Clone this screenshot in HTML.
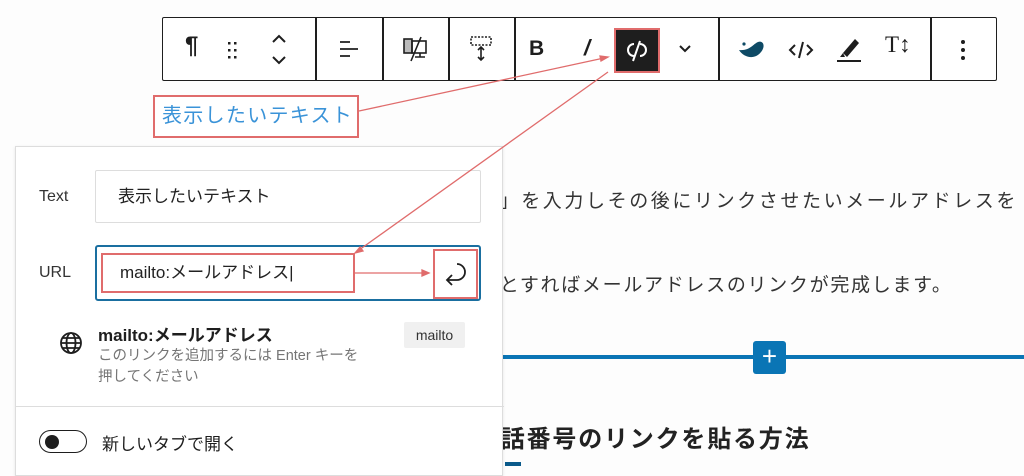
<!DOCTYPE html>
<html><head><meta charset="utf-8"><style>
*{box-sizing:border-box;margin:0;padding:0}
body{width:1024px;height:466px;overflow:hidden;background:#fdfdfd;font-family:"Liberation Sans","Noto Sans CJK JP",sans-serif;position:relative;color:#1e1e1e}
.abs{position:absolute}
.tb{left:162px;top:17px;width:835px;height:64px;border:1.5px solid #1e1e1e;border-radius:2px;background:#fff}
.sep{position:absolute;top:0;bottom:0;width:1.5px;background:#1e1e1e}
.body{font-size:19px;color:#333;white-space:nowrap;letter-spacing:1.7px}
</style></head><body>
<div class="abs body" style="left:478px;top:186px;letter-spacing:2.6px">ト」を入力しその後にリンクさせたいメールアドレスを</div>
<div class="abs body" style="left:479px;top:270px">」とすればメールアドレスのリンクが完成します。</div>
<div class="abs" style="left:500px;top:355px;width:524px;height:4px;background:#0a75b5"></div>
<div class="abs" style="left:753px;top:341px;width:33px;height:33px;background:#0a75b5;border-radius:3px;color:#fff;font-size:26px;line-height:31px;text-align:center">+</div>
<div class="abs" style="left:475px;top:419px;font-size:24px;letter-spacing:1.8px;font-weight:bold;color:#222;white-space:nowrap">電話番号のリンクを貼る方法</div>
<div class="abs" style="left:505px;top:462px;width:16px;height:4px;background:#0a5a8a"></div>

<div class="abs tb">
<div class="sep" style="left:152px"></div><div class="sep" style="left:219px"></div><div class="sep" style="left:285px"></div><div class="sep" style="left:351px"></div><div class="sep" style="left:555px"></div><div class="sep" style="left:767px"></div>
<div class="abs" style="left:22px;top:14px;font-size:24px;font-weight:bold">¶</div>
<svg class="abs" style="left:63px;top:22px" width="14" height="20"><g fill="#1e1e1e"><rect x="2" y="2" width="2.5" height="2.5"/><rect x="8" y="2" width="2.5" height="2.5"/><rect x="2" y="9" width="2.5" height="2.5"/><rect x="8" y="9" width="2.5" height="2.5"/><rect x="2" y="16" width="2.5" height="2.5"/><rect x="8" y="16" width="2.5" height="2.5"/></g></svg>
<svg class="abs" style="left:106px;top:14px" width="20" height="36" fill="none" stroke="#1e1e1e" stroke-width="2"><path d="M4 10l6-6 6 6M4 25l6 6 6-6"/></svg>
<svg class="abs" style="left:174px;top:19px" width="24" height="24" stroke="#1e1e1e" stroke-width="1.8"><path d="M3 5h10M3 12h18M3 19h10"/></svg>
<svg class="abs" style="left:238px;top:17px" width="30" height="28" fill="none" stroke="#1e1e1e" stroke-width="1.6"><rect x="3" y="4" width="8" height="14" fill="#1e1e1e" fill-opacity=".3"/><rect x="11" y="6" width="14" height="12"/><path d="M14 22h10M19 18v4M20 2l-10 24"/></svg>
<svg class="abs" style="left:304px;top:16px" width="28" height="30" fill="none" stroke="#1e1e1e" stroke-width="1.6"><rect x="4" y="3" width="20" height="8" stroke-dasharray="2 1.5"/><path d="M14 13v13M11 16l3-3 3 3M11 23l3 3 3-3"/></svg>
<div class="abs" style="left:366px;top:19px;font-size:21px;font-weight:bold">B</div>
<div class="abs" style="left:421px;top:17px;font-size:22px;font-style:italic;font-weight:bold">/</div>
<div class="abs" style="left:451px;top:10px;width:46px;height:45px;background:#1e1e1e;border:2px solid #e06c6c"></div>
<svg class="abs" style="left:460px;top:19px" width="28" height="28" fill="none" stroke="#fff" stroke-width="2"><path d="M11 7a6 6 0 0 0 0 12M17 7a6 6 0 0 1 0 12M17 4l-7 20"/></svg>
<svg class="abs" style="left:514px;top:24px" width="16" height="14" fill="none" stroke="#1e1e1e" stroke-width="2"><path d="M3 4l5 5 5-5"/></svg>
<svg class="abs" style="left:574px;top:18px" width="30" height="26"><path d="M2 14c5 8 16 10 22 2 5-6 2-12-3-10-5 2-8 9-19 8z" fill="#0e4a65"/><circle cx="7" cy="8" r="1.6" fill="#0e4a65"/></svg>
<svg class="abs" style="left:625px;top:20px" width="26" height="24" fill="none" stroke="#1e1e1e" stroke-width="2"><path d="M7 7l-5 5 5 5M19 7l5 5-5 5M15 4l-4 16"/></svg>
<svg class="abs" style="left:672px;top:15px" width="28" height="30"><path d="M8 20l12-14 4 4-12 14z" fill="#1e1e1e"/><path d="M8 20l-3 4h5z" fill="#1e1e1e"/><rect x="2" y="27" width="24" height="2" fill="#1e1e1e"/></svg>
<div class="abs" style="left:722px;top:14px;font-size:23px;font-family:'Liberation Serif',serif">T↕</div>
<svg class="abs" style="left:796px;top:20px" width="8" height="24" fill="#1e1e1e"><circle cx="4" cy="4" r="2"/><circle cx="4" cy="12" r="2"/><circle cx="4" cy="20" r="2"/></svg>
</div>

<div class="abs" style="left:153px;top:95px;width:206px;height:43px;border:2px solid #e06c6c;color:#3a93d8;font-size:20px;letter-spacing:1.3px;line-height:39px;padding-left:7px;background:#fff;white-space:nowrap">表示したいテキスト</div>

<div class="abs" style="left:15px;top:146px;width:488px;height:330px;background:#fff;border:1px solid #ddd;box-shadow:0 1px 3px rgba(0,0,0,.1)">
<div class="abs" style="left:23px;top:41px;font-size:16px;color:#333">Text</div>
<div class="abs" style="left:79px;top:23px;width:386px;height:53px;border:1px solid #ddd;border-radius:2px;font-size:17px;line-height:51px;padding-left:22px;color:#222">表示したいテキスト</div>
<div class="abs" style="left:23px;top:117px;font-size:16px;color:#333">URL</div>
<div class="abs" style="left:79px;top:98px;width:386px;height:56px;border:2.5px solid #1a6fa0;border-radius:3px"></div>
<div class="abs" style="left:85px;top:106px;width:254px;height:40px;border:2px solid #e06c6c;font-size:17px;line-height:36px;padding-left:17px;color:#222">mailto:メールアドレス|</div>
<div class="abs" style="left:417px;top:102px;width:45px;height:50px;border:2px solid #e06c6c;background:#fff"></div>
<svg class="abs" style="left:427px;top:112px" width="28" height="30" fill="none" stroke="#1e1e1e" stroke-width="1.8"><path d="M14 5a8 8 0 1 1 0 16H5M9 16l-5 5 5 5"/></svg>
<svg class="abs" style="left:42px;top:183px" width="26" height="26" fill="none" stroke="#1e1e1e" stroke-width="1.8"><circle cx="13" cy="13" r="10"/><ellipse cx="13" cy="13" rx="4.5" ry="10"/><path d="M3 13h20M5 8h16M5 18h16"/></svg>
<div class="abs" style="left:82px;top:174px;font-size:17px;font-weight:bold;color:#1e1e1e">mailto:メールアドレス</div>
<div class="abs" style="left:82px;top:199px;font-size:14.5px;line-height:21px;color:#757575;width:300px">このリンクを追加するには Enter キーを<br>押してください</div>
<div class="abs" style="left:388px;top:175px;width:61px;height:26px;background:#f0f0f0;border-radius:2px;font-size:14px;line-height:26px;text-align:center;color:#333">mailto</div>
<div class="abs" style="left:0;top:259px;width:488px;height:1px;background:#ddd"></div>
<div class="abs" style="left:23px;top:283px;width:48px;height:23px;border:1.5px solid #1e1e1e;border-radius:12px"></div>
<div class="abs" style="left:29px;top:288px;width:14px;height:14px;border-radius:50%;background:#1e1e1e"></div>
<div class="abs" style="left:86px;top:283px;font-size:17px;color:#1e1e1e">新しいタブで開く</div>
</div>

<svg class="abs" style="left:0;top:0" width="1024" height="466"><g stroke="#e06c6c" stroke-width="1.3" fill="#e06c6c"><line x1="359" y1="111" x2="604" y2="58"/><path d="M608 57l-8-1 1 5z"/><line x1="608" y1="72" x2="359" y2="250"/><path d="M355 253l8-2-3-4z"/><line x1="354" y1="273" x2="424" y2="273"/><path d="M429 273l-7-3v6z"/></g></svg>
</body></html>
